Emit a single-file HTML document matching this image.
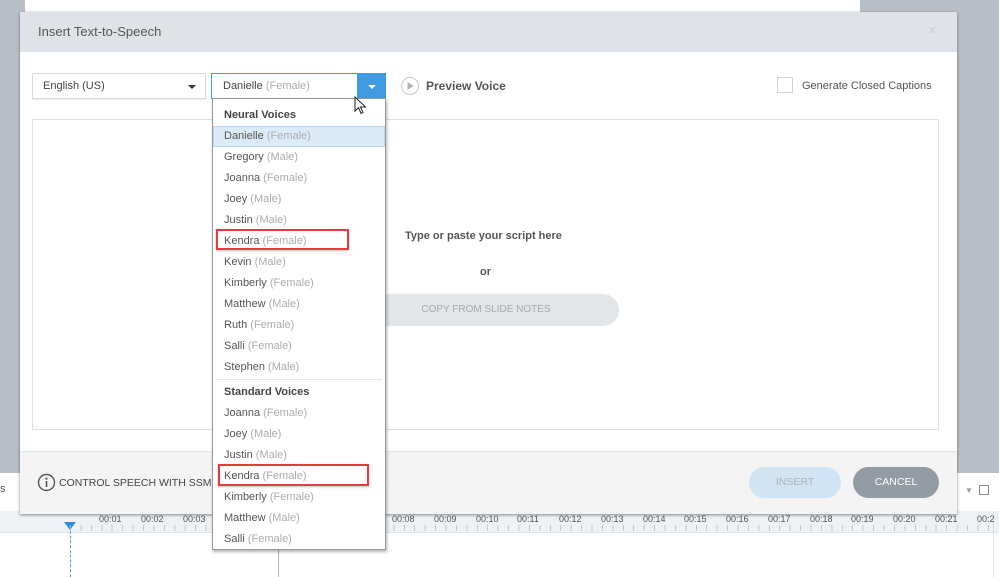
<!DOCTYPE html><html><head><style>
*{margin:0;padding:0;box-sizing:border-box}
body{width:999px;height:577px;position:relative;overflow:hidden;background:#fff;font-family:"Liberation Sans",sans-serif;font-size:11px;color:#444}
.a{position:absolute}
.g{color:#a9adb1}
.it{position:absolute;left:11px;height:21px;line-height:21px;font-size:11px;color:#555}
.hd{position:absolute;left:11px;font-weight:bold;font-size:11px;color:#444}
.tl{position:absolute;top:514px;font-size:9px;color:#555}
</style></head><body>
<div class="a" style="left:0;top:0;width:999px;height:473px;background:#b9bfc6"></div>
<div class="a" style="left:25px;top:0;width:835px;height:473px;background:#fff"></div>
<div class="a" style="left:0;top:473px;width:999px;height:38px;background:#fff"></div>
<div class="a" style="left:0;top:483px;font-size:11px;color:#555">s</div>
<div class="a" style="left:0;top:511px;width:999px;height:22px;background:#eef2f5;border-bottom:1px solid #dde2e6"></div>
<div class="a" style="left:70px;top:526px;width:0;height:51px;border-left:1px dashed #4a9fe0"></div>
<div class="a" style="left:64px;top:522px;width:0;height:0;border-left:6px solid transparent;border-right:6px solid transparent;border-top:8px solid #2f8fdb"></div>
<div class="a" style="left:278px;top:533px;width:1px;height:44px;background:#aab4be"></div>
<div class="a" style="left:965px;top:486px;color:#999;font-size:8px">▼</div>
<div class="a" style="left:979px;top:485px;width:10px;height:10px;border:1px solid #888"></div>
<div class="a" style="left:993px;top:511px;width:1px;height:66px;background:#dde"></div>
<div class="tl" style="left:99px">00:01</div><div class="tl" style="left:141px">00:02</div><div class="tl" style="left:183px">00:03</div>
<div class="tl" style="left:392px">00:08</div><div class="tl" style="left:434px">00:09</div><div class="tl" style="left:476px">00:10</div><div class="tl" style="left:517px">00:11</div><div class="tl" style="left:559px">00:12</div><div class="tl" style="left:601px">00:13</div><div class="tl" style="left:643px">00:14</div><div class="tl" style="left:684px">00:15</div><div class="tl" style="left:726px">00:16</div><div class="tl" style="left:768px">00:17</div><div class="tl" style="left:810px">00:18</div><div class="tl" style="left:851px">00:19</div><div class="tl" style="left:893px">00:20</div><div class="tl" style="left:935px">00:21</div><div class="tl" style="left:977px">00:2</div>
<div class="a" style="left:70px;top:525px;width:923px;height:6px;background:repeating-linear-gradient(90deg,#b8bec4 0 1px,transparent 1px 10.43px);opacity:.8"></div>

<!-- dialog -->
<div class="a" style="left:20px;top:12px;width:937px;height:502px;background:#fff;box-shadow:0 1px 3px rgba(0,0,0,.45)">
<div class="a" style="left:0;top:0;width:937px;height:40px;background:#dfe3e7"></div>
<div class="a" style="left:18px;top:12px;font-size:13px;color:#555">Insert Text-to-Speech</div>
<div class="a" style="left:908px;top:10px;font-size:15px;color:#c8ccd0">×</div>
<div class="a" style="left:12px;top:61px;width:174px;height:26px;border:1px solid #d5d9dd;box-shadow:0 1px 1px rgba(0,0,0,.08)"></div>
<div class="a" style="left:23px;top:68px;font-size:11px;color:#444">English (US)</div>
<div class="a" style="left:168px;top:73px;border-left:4px solid transparent;border-right:4px solid transparent;border-top:4px solid #333"></div>
<div class="a" style="left:191px;top:61px;width:175px;height:26px;border:1px solid #3f9ae0;background:#fff"></div>
<div class="a" style="left:337px;top:61px;width:29px;height:26px;background:#3f9ae0"></div>
<div class="a" style="left:348px;top:73px;border-left:4px solid transparent;border-right:4px solid transparent;border-top:4px solid #fff"></div>
<div class="a" style="left:203px;top:68px">Danielle <span class="g">(Female)</span></div>
<svg class="a" style="left:380px;top:64px" width="20" height="20"><circle cx="10" cy="10" r="8.5" fill="none" stroke="#c5c9cd" stroke-width="1"/><path d="M7.5 6v8l6-4z" fill="#b0b4b8"/></svg>
<div class="a" style="left:406px;top:67px;font-weight:bold;font-size:12px;color:#555">Preview Voice</div>
<div class="a" style="left:757px;top:65px;width:16px;height:16px;border:1px solid #cfd3d7"></div>
<div class="a" style="left:782px;top:68px;font-size:11px;color:#555">Generate Closed Captions</div>
<div class="a" style="left:12px;top:107px;width:907px;height:311px;border:1px solid #dde1e5"></div>
<div class="a" style="left:385px;top:218px;font-weight:bold;font-size:11px;color:#555">Type or paste your script here</div>
<div class="a" style="left:460px;top:254px;font-weight:bold;font-size:11px;color:#555">or</div>
<div class="a" style="left:333px;top:282px;width:266px;height:32px;border-radius:16px;background:#e3e6e9;color:#a5aaaf;font-size:10px;text-align:center;line-height:32px">COPY FROM SLIDE NOTES</div>
<div class="a" style="left:0;top:439px;width:937px;height:63px;background:#f4f4f4;border-top:1px solid #e2e5e8"></div>
<svg class="a" style="left:17px;top:461px" width="19" height="19"><circle cx="9.5" cy="9.5" r="8" fill="none" stroke="#555" stroke-width="1.4"/><circle cx="9.5" cy="5.6" r="1.1" fill="#555"/><rect x="8.7" y="8" width="1.6" height="6" fill="#555"/></svg>
<div class="a" style="left:39px;top:465px;font-size:10.5px;color:#444">CONTROL SPEECH WITH SSML</div>
<div class="a" style="left:729px;top:455px;width:92px;height:31px;border-radius:16px;background:#d0e4f3;color:#a8b4be;font-size:10.5px;text-align:center;line-height:31px">INSERT</div>
<div class="a" style="left:833px;top:455px;width:86px;height:31px;border-radius:16px;background:#939ca5;color:#fff;font-size:10.5px;text-align:center;line-height:31px">CANCEL</div>
</div>

<!-- dropdown list -->
<div class="a" style="left:212px;top:98px;width:174px;height:452px;background:#fff;border:1px solid #999;box-shadow:1px 2px 3px rgba(0,0,0,.3)">
<div class="hd" style="top:10px">Neural Voices</div>
<div class="a" style="left:0;top:27px;width:172px;height:21px;background:#dcebf8;border:1px solid #b9d6ef"></div>
<div class="it" style="top:27px">Danielle <span class="g">(Female)</span></div>
<div class="it" style="top:48px">Gregory <span class="g">(Male)</span></div>
<div class="it" style="top:69px">Joanna <span class="g">(Female)</span></div>
<div class="it" style="top:90px">Joey <span class="g">(Male)</span></div>
<div class="it" style="top:111px">Justin <span class="g">(Male)</span></div>
<div class="it" style="top:132px">Kendra <span class="g">(Female)</span></div>
<div class="it" style="top:153px">Kevin <span class="g">(Male)</span></div>
<div class="it" style="top:174px">Kimberly <span class="g">(Female)</span></div>
<div class="it" style="top:195px">Matthew <span class="g">(Male)</span></div>
<div class="it" style="top:216px">Ruth <span class="g">(Female)</span></div>
<div class="it" style="top:237px">Salli <span class="g">(Female)</span></div>
<div class="it" style="top:258px">Stephen <span class="g">(Male)</span></div>
<div class="a" style="left:3px;top:280px;width:166px;height:1px;background:#e4e7ea"></div>
<div class="hd" style="top:287px">Standard Voices</div>
<div class="it" style="top:304px">Joanna <span class="g">(Female)</span></div>
<div class="it" style="top:325px">Joey <span class="g">(Male)</span></div>
<div class="it" style="top:346px">Justin <span class="g">(Male)</span></div>
<div class="it" style="top:367px">Kendra <span class="g">(Female)</span></div>
<div class="it" style="top:388px">Kimberly <span class="g">(Female)</span></div>
<div class="it" style="top:409px">Matthew <span class="g">(Male)</span></div>
<div class="it" style="top:430px">Salli <span class="g">(Female)</span></div>
</div>
<div class="a" style="left:216px;top:229px;width:133px;height:21px;border:2px solid #e8393c;box-shadow:0 1px 2px rgba(0,0,0,.25)"></div>
<div class="a" style="left:218px;top:464px;width:151px;height:22px;border:2px solid #e8393c;box-shadow:0 1px 2px rgba(0,0,0,.25)"></div>
<svg class="a" style="left:354px;top:96px" width="14" height="20"><path d="M1 1v14l3.5-3.5 2.5 6 2-1-2.5-5.5h5z" fill="#fff" stroke="#222" stroke-width="1"/></svg>
</body></html>
